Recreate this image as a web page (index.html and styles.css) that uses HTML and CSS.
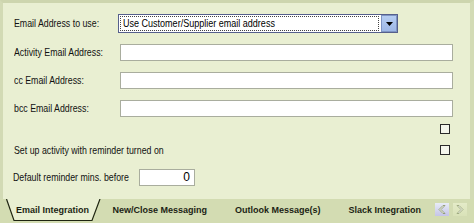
FILE: index.html
```html
<!DOCTYPE html>
<html>
<head>
<meta charset="utf-8">
<link rel="stylesheet" href="styles.css">
</head>
<body>
<div class="window">
  <div class="panel">
    <div class="row row-first">
      <span class="label"><span class="nt">Email Address to use:</span></span>
      <div class="select">
        <span class="select-text"><span class="focus"><span class="nt">Use Customer/Supplier email address</span></span></span>
        <span class="select-btn"><svg width="7" height="4" viewBox="0 0 7 4"><path d="M0 0H7L3.5 4Z" fill="#000"/></svg></span>
      </div>
    </div>
    <div class="row">
      <span class="label"><span class="nt">Activity Email Address:</span></span>
      <div class="input wide"></div>
    </div>
    <div class="row">
      <span class="label"><span class="nt">cc Email Address:</span></span>
      <div class="input wide"></div>
    </div>
    <div class="row">
      <span class="label"><span class="nt">bcc Email Address:</span></span>
      <div class="input wide"></div>
    </div>
    <div class="row row-check1">
      <span class="label"></span>
      <span class="checkbox"></span>
    </div>
    <div class="row row-check2">
      <span class="label"><span class="nt">Set up activity with reminder turned on</span></span>
      <span class="checkbox"></span>
    </div>
    <div class="row row-num">
      <span class="label label-num"><span class="nt">Default reminder mins. before</span></span>
      <div class="input num">0</div>
    </div>
  </div>
  <div class="tabstrip">
    <div class="tab active">
      <svg class="tab-shape" width="98" height="24" viewBox="0 0 98 24"><path d="M0 0 L8 21.5 L86 21.5 L94 0 Z" fill="#e9efd2"/><path d="M0.5 0 L8 21.5 L86 21.5 L94 0" fill="none" stroke="#1e2410" stroke-width="1.2"/></svg>
      <span class="tab-text">Email Integration</span>
    </div>
    <div class="tab">New/Close Messaging</div>
    <div class="tab">Outlook Message(s)</div>
    <div class="tab">Slack Integration</div>
    <div class="scrollers">
      <span class="sbtn sbtn-left"><svg width="14" height="13" viewBox="0 0 14 13"><path d="M8 2.5 L4 6.5 L8 10.5 L10 10.5 L6 6.5 L10 2.5 Z" fill="#f4f6ee" stroke="#8c9870" stroke-width="0.9"/></svg></span>
      <span class="sbtn sbtn-right"><svg width="14" height="13" viewBox="0 0 14 13"><path d="M6 2.5 L10 6.5 L6 10.5 L4 10.5 L8 6.5 L4 2.5 Z" fill="#f4f6ee" stroke="#9aa67a" stroke-width="0.9"/></svg></span>
    </div>
  </div>
</div>
</body>
</html>
```
FILE: styles.css
```css
html, body {
  margin: 0;
  padding: 0;
  background: #e9efd2;
}
.window {
  width: 474px;
  height: 223px;
  display: flex;
  flex-direction: column;
  font-family: "Liberation Sans", Arial, sans-serif;
  color: #111;
}
.panel {
  height: 199px;
  box-sizing: border-box;
  background: #e9efd2;
  border-top: 3px solid #cdd5ae;
  border-left: 3px solid #d2dab4;
  border-right: 4px solid #d3dbb6;
  padding: 11px 0 0 11px;
  display: flex;
  flex-direction: column;
}
.row {
  display: flex;
  align-items: center;
  margin-bottom: 11px;
}
.label {
  width: 105px;
  font-size: 11px;
  line-height: 13px;
  white-space: nowrap;
  flex: none;
}
.nt {
  display: inline-block;
  transform: scaleX(0.8);
  transform-origin: 0 50%;
  white-space: nowrap;
}
.row-first { height: 19px; }
.select {
  width: 280px;
  height: 19px;
  box-sizing: border-box;
  border: 1px solid #56608c;
  background: #fff;
  display: flex;
  align-items: stretch;
  margin-left: -1px;
}
.select-text {
  flex: 1;
  padding: 1px 2px 1px 1px;
  display: flex;
  min-width: 0;
}
.focus {
  flex: 1;
  border: 1px dotted #444;
  font-size: 11px;
  line-height: 13px;
  padding-left: 2px;
  color: #000;
  overflow: hidden;
}
.focus .nt { transform: scaleX(0.82); }
.select-btn {
  width: 16px;
  box-sizing: border-box;
  background: linear-gradient(#b6cdf2, #9db7e6);
  border: 1px solid #7e94c4;
  display: flex;
  align-items: center;
  justify-content: center;
}
.input {
  height: 17px;
  box-sizing: border-box;
  border: 1px solid #a9ad9e;
  background: #fff;
}
.wide {
  width: 333px;
  margin-left: 1px;
}
.row-check1 {
  height: 10px;
  margin-top: -4px;
}
.row-check1 .label,
.row-check2 .label { width: 426px; }
.checkbox {
  width: 10px;
  height: 10px;
  box-sizing: border-box;
  border: 1px solid #2a2a2a;
  background: #f4f6ec;
}
.row-check2 { height: 10px; }
.row-num {
  height: 17px;
  margin-top: 3px;
}
.label-num {
  width: 126px;
  margin-left: -1px;
}
.num {
  width: 56px;
  font-size: 12px;
  line-height: 15px;
  text-align: right;
  padding-right: 4px;
  color: #000;
}
.tabstrip {
  height: 24px;
  background: #d3dcb2;
  display: flex;
  align-items: center;
  padding-left: 6px;
  font-weight: bold;
  font-size: 9px;
  color: #1c1f14;
}
.tab {
  padding: 0 14px;
  line-height: 14px;
  white-space: nowrap;
}
.tab.active {
  position: relative;
  align-self: stretch;
  width: 96px;
  padding: 0;
  display: flex;
  align-items: center;
}
.tab-shape {
  position: absolute;
  left: 0;
  top: 0;
}
.tab-text {
  position: relative;
  margin-left: 10px;
  margin-top: -3px;
}
.tab:not(.active) { margin-top: -3px; }
.scrollers {
  margin-left: auto;
  margin-right: 7px;
  display: flex;
  gap: 4px;
  margin-top: -3px;
}
.sbtn {
  width: 14px;
  height: 13px;
  display: block;
}
.sbtn svg { display: block; }
.sbtn-left { background: linear-gradient(#e8ecf6, #c4c4e8); }
.sbtn-right { background: linear-gradient(#e4ebc8, #d9e2b8); }
```
